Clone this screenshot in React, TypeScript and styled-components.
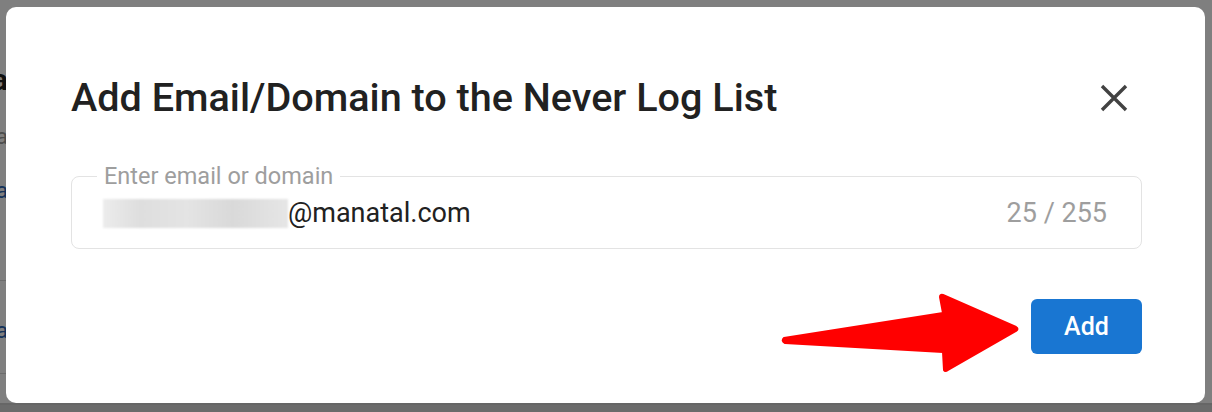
import React from "react";
import styled, { createGlobalStyle } from "styled-components";

const GlobalStyle = createGlobalStyle`
  html, body {
    margin: 0;
    padding: 0;
    width: 1212px;
    height: 412px;
    overflow: hidden;
    background: #ffffff;
    font-family: Roboto, "Liberation Sans", Arial, sans-serif;
  }
  * { box-sizing: border-box; }
`;

const Screen = styled.div`
  position: relative;
  width: 1212px;
  height: 412px;
  overflow: hidden;
`;

/* Page content that sits behind the dialog backdrop */
const Page = styled.div`
  display: flex;
  flex-direction: column;
  height: 100%;
`;

const PageBody = styled.div`
  flex: 1;
  display: flex;
  flex-direction: column;
  width: 8px;
  overflow: hidden;
  padding-top: 62px;
`;

const PageLine = styled.div<{ $tone: "title" | "muted" | "link"; $gap: number }>`
  display: flex;
  justify-content: flex-end;
  white-space: nowrap;
  margin-top: ${(p) => p.$gap}px;
  font-size: ${(p) => (p.$tone === "title" ? 30 : 22)}px;
  font-weight: ${(p) => (p.$tone === "title" ? 700 : 400)};
  line-height: 1.2;
  color: ${(p) =>
    p.$tone === "title" ? "#222" : p.$tone === "muted" ? "#9a9a9a" : "#2a64b4"};
`;

const PageRule = styled.div<{ $gap: number }>`
  height: 1px;
  width: 100%;
  background: #d8d8d8;
  margin-top: ${(p) => p.$gap}px;
`;

const PageFooter = styled.div`
  height: 9px;
  background: #d6d6d6;
  border-top: 2px solid #cccccc;
`;

const Backdrop = styled.div`
  position: absolute;
  inset: 0;
  background: rgba(0, 0, 0, 0.5);
`;

const Dialog = styled.div`
  position: absolute;
  left: 6px;
  top: 7px;
  width: 1199px;
  height: 396px;
  background: #ffffff;
  border-radius: 10px;
  display: flex;
  flex-direction: column;
  padding: 67px 63px 0 65px;
`;

const Header = styled.div`
  display: flex;
  align-items: center;
  justify-content: space-between;
`;

const Title = styled.h2`
  margin: 0;
  font-size: 39.6px;
  font-weight: 500;
  line-height: 48px;
  color: #212121;
`;

const CloseButton = styled.button`
  display: flex;
  align-items: center;
  justify-content: center;
  width: 44px;
  height: 44px;
  margin-right: 6px;
  padding: 0;
  border: none;
  background: transparent;
  color: #424242;
  cursor: pointer;
`;

const Field = styled.div`
  position: relative;
  margin-top: 54px;
  height: 73px;
  padding: 0 34px 0 31px;
  border: 1px solid #e3e3e3;
  border-radius: 8px;
  display: flex;
  align-items: center;
`;

/* Floating label that notches the outline */
const FieldLabel = styled.label`
  position: absolute;
  left: 25px;
  top: -15px;
  padding: 0 7px;
  background: #ffffff;
  font-size: 23.5px;
  line-height: 28px;
  color: #9e9e9e;
`;

const Value = styled.div`
  display: flex;
  align-items: center;
  font-size: 27px;
  color: #212121;
`;

const Redacted = styled.span`
  display: inline-block;
  width: 185px;
  height: 29px;
  margin-top: 1px;
  background: linear-gradient(
    90deg,
    #ececec 0%,
    #dedede 20%,
    #e4e4e4 45%,
    #d9d9d9 70%,
    #e6e6e6 100%
  );
  filter: blur(1px);
`;

const Counter = styled.span`
  margin-left: auto;
  font-size: 27px;
  color: #9e9e9e;
`;

const Actions = styled.div`
  display: flex;
  justify-content: flex-end;
  margin-top: 50px;
`;

const PrimaryButton = styled.button`
  width: 111px;
  height: 55px;
  border: none;
  border-radius: 6px;
  background: #1976d2;
  color: #ffffff;
  font-family: Roboto, "Liberation Sans", Arial, sans-serif;
  font-size: 25px;
  font-weight: 500;
  cursor: pointer;
`;

const Pointer = styled.svg`
  position: absolute;
  left: 0;
  top: 0;
  pointer-events: none;
`;

export default function App() {
  return (
    <>
      <GlobalStyle />
      <Screen>
        <Page>
          <PageBody>
            <PageLine $tone="title" $gap={0}>a</PageLine>
            <PageLine $tone="muted" $gap={26}>a</PageLine>
            <PageLine $tone="link" $gap={28}>ea</PageLine>
            <PageRule $gap={75} />
            <PageLine $tone="link" $gap={37}>a</PageLine>
            <PageRule $gap={29} />
          </PageBody>
          <PageFooter />
        </Page>
        <Backdrop />
        <Dialog>
          <Header>
            <Title>Add Email/Domain to the Never Log List</Title>
            <CloseButton aria-label="Close">
              <svg width="28" height="28" viewBox="0 0 28 28">
                <path
                  d="M2 2 L26 26 M26 2 L2 26"
                  stroke="currentColor"
                  strokeWidth="3.4"
                  strokeLinecap="butt"
                />
              </svg>
            </CloseButton>
          </Header>
          <Field>
            <FieldLabel>Enter email or domain</FieldLabel>
            <Value>
              <Redacted />
              <span>@manatal.com</span>
            </Value>
            <Counter>25 / 255</Counter>
          </Field>
          <Actions>
            <PrimaryButton>Add</PrimaryButton>
          </Actions>
          <Pointer width="1199" height="396" viewBox="0 0 1199 396">
            <path
              d="M778 331 Q775 334 779 336 L937 345 L938 363 Q939 365 942 363 L1010 324 Q1013 322 1010 320 L937 288 Q934 287 934 290 L937 306 Z"
              fill="#ff0000"
              stroke="#ff0000"
              strokeWidth="2"
              strokeLinejoin="round"
            />
          </Pointer>
        </Dialog>
      </Screen>
    </>
  );
}
